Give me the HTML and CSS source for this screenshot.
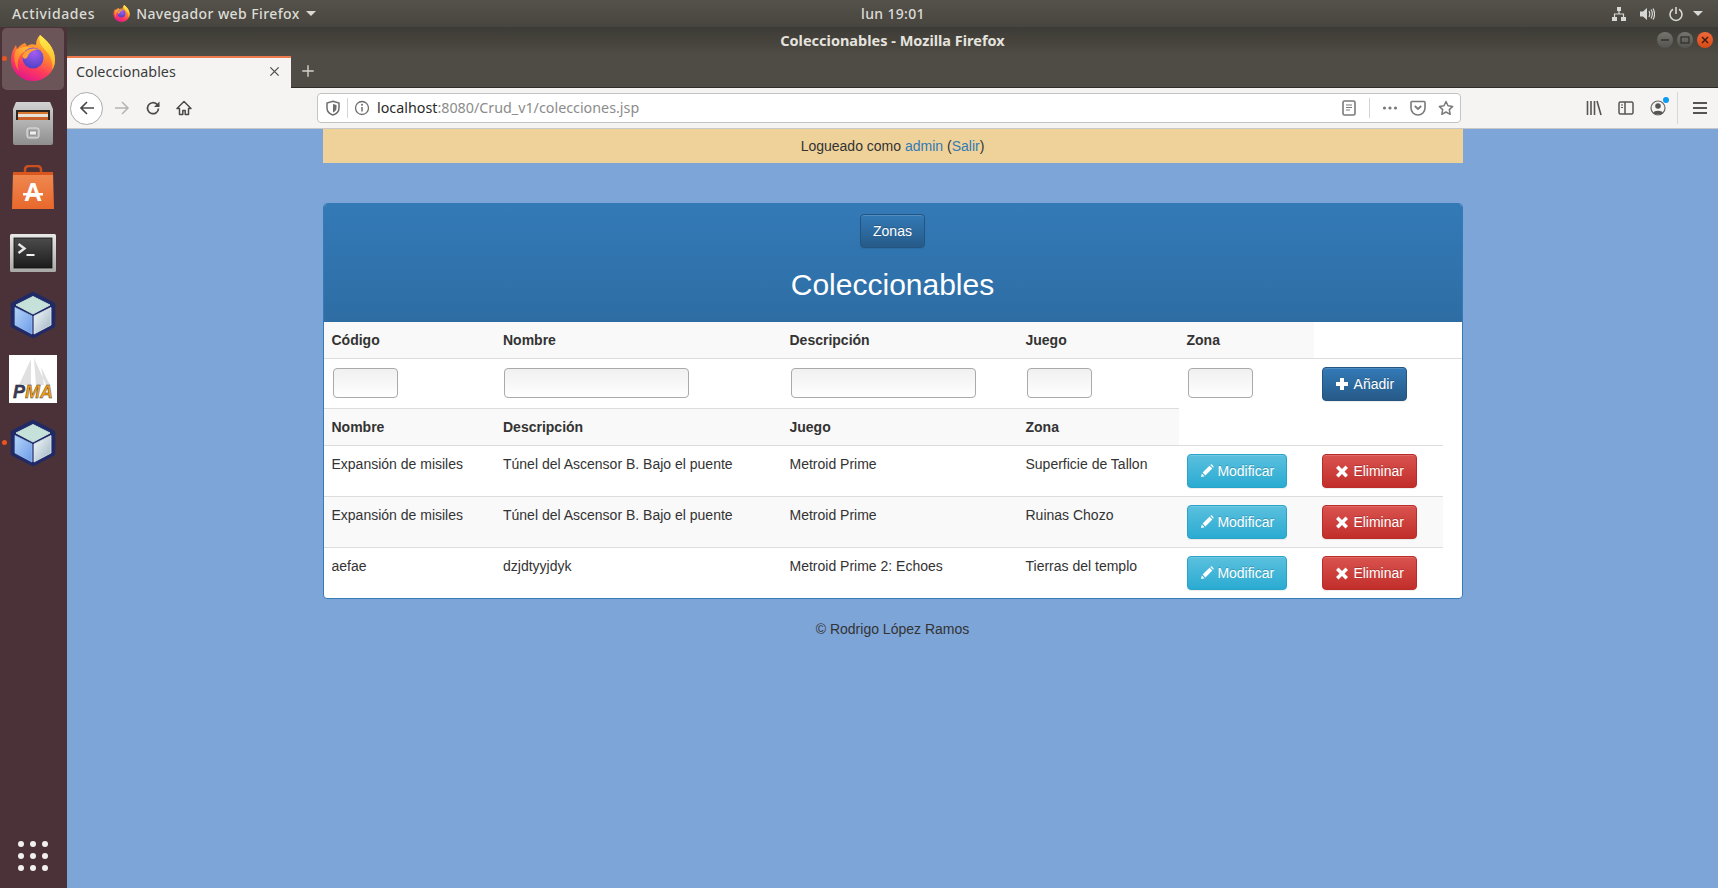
FILE: index.html
```html
<!DOCTYPE html>
<html lang="es">
<head>
<meta charset="utf-8">
<title>Coleccionables - Mozilla Firefox</title>
<link rel="stylesheet" href="styles.css">
</head>
<body>
<svg class="defs" aria-hidden="true">
  <defs>
    <linearGradient id="ffBody" x1="0.8" y1="0" x2="0.35" y2="1">
      <stop offset="0" stop-color="#ffc93a"/><stop offset="0.4" stop-color="#ff8a2c"/><stop offset="0.72" stop-color="#ff3a5e"/><stop offset="1" stop-color="#e0188c"/>
    </linearGradient>
    <linearGradient id="ffTail" x1="0.5" y1="0" x2="0.5" y2="1">
      <stop offset="0" stop-color="#fff04a"/><stop offset="0.7" stop-color="#ffc233"/><stop offset="1" stop-color="#ff9a2e"/>
    </linearGradient>
    <linearGradient id="ffFox" x1="0.8" y1="0" x2="0.1" y2="1">
      <stop offset="0" stop-color="#ffc53a"/><stop offset="1" stop-color="#ff6a28"/>
    </linearGradient>
    <radialGradient id="ffGlobe" cx="0.55" cy="0.25" r="0.8">
      <stop offset="0" stop-color="#a45cf0"/><stop offset="1" stop-color="#4a40c4"/>
    </radialGradient>
    <linearGradient id="cubeLeft" x1="0" y1="0" x2="1" y2="1">
      <stop offset="0" stop-color="#b5d4f8"/><stop offset="1" stop-color="#6d9be8"/>
    </linearGradient>
    <linearGradient id="cubeRight" x1="0" y1="0" x2="1" y2="1">
      <stop offset="0" stop-color="#f6fafb"/><stop offset="1" stop-color="#9db3c2"/>
    </linearGradient>
    <linearGradient id="bagFill" x1="0" y1="0" x2="0" y2="1">
      <stop offset="0" stop-color="#ef8a52"/><stop offset="1" stop-color="#e9682c"/>
    </linearGradient>
    <linearGradient id="cabFill" x1="0" y1="0" x2="0" y2="1">
      <stop offset="0" stop-color="#d2d2d2"/><stop offset="1" stop-color="#8e8e8e"/>
    </linearGradient>
    <linearGradient id="termFrame" x1="0" y1="0" x2="0" y2="1">
      <stop offset="0" stop-color="#e8e8e6"/><stop offset="1" stop-color="#a8a8a6"/>
    </linearGradient>
    <linearGradient id="termScreen" x1="0" y1="0" x2="0" y2="1">
      <stop offset="0" stop-color="#4c4c4c"/><stop offset="1" stop-color="#1c1c1c"/>
    </linearGradient>
    <symbol id="firefox" viewBox="0 0 46 46">
      <path d="M30 0C36 5 45 12 45 25A22 21 0 0 1 1 25C1 19 3 14 6 10L7 14C9 11 12 9 15 8L17 11C20 9 23 9 26 10C26 6 27 3 30 0z" fill="url(#ffBody)"/>
      <path d="M30 0C36 5 45 12 45 25C45 29 44 32 42 35C43 28 41 21 36 16C31 11 28 6 30 0z" fill="url(#ffTail)"/>
      <path d="M6 15C3 21 4 30 9 36C6 28 9 19 14 17C17 16 22 17 28 14C24 13 20 12 16 12C12 12 9 13 6 15z" fill="url(#ffFox)"/>
      <circle cx="23" cy="23" r="10.500" fill="url(#ffGlobe)"/>
      <path d="M12.500 21C14 15 22 11 30 15C25 14 20 16 18 21C17 24 13 25 12.500 21z" fill="#ffa030"/>
    </symbol>
    <symbol id="cube" viewBox="0 0 46 48">
      <polygon points="23,3 43,13.500 43,34.500 23,45 3,34.500 3,13.500" fill="#1f2a66" stroke="#1f2a66" stroke-width="4.500" stroke-linejoin="round"/>
      <polygon points="23,5.500 40,14 23,23 6,14" fill="#c6e0da" stroke="#c6e0da" stroke-linejoin="round"/>
      <polygon points="5,16.500 22,25 22,43 5,34" fill="url(#cubeLeft)" stroke="#9cc0f0" stroke-width="0.800" stroke-linejoin="round"/>
      <polygon points="41,16.500 24,25 24,43 41,34" fill="url(#cubeRight)" stroke="#dfe8ee" stroke-width="0.800" stroke-linejoin="round"/>
    </symbol>
  </defs>
</svg>

<header class="topbar">
  <span class="top-activities">Actividades</span>
  <span class="top-app">
    <svg class="ff-small"><use href="#firefox"/></svg>
    <span>Navegador web Firefox</span>
    <span class="caret"></span>
  </span>
  <span class="top-clock">lun 19:01</span>
  <span class="top-status">
    <svg class="st-net" viewBox="0 0 16 16"><path d="M6 1h4v4H6zM1 11h5v4H1zM10 11h5v4h-5z" fill="#d8d8d4"/><path d="M8 5v3M3.500 11V8h9v3" stroke="#d8d8d4" fill="none" stroke-width="1.200"/></svg>
    <svg class="st-vol" viewBox="0 0 16 16"><path d="M1 5.500h3L8 2v12L4 10.500H1z" fill="#d8d8d4"/><path d="M10 5c1 2 1 4 0 6M12 3.500c1.800 3 1.800 6 0 9M14 2.500c2 3.500 2 7.500 0 11" stroke="#d8d8d4" fill="none" stroke-width="1.200"/></svg>
    <svg class="st-pow" viewBox="0 0 16 16"><path d="M5 3.300a6 6 0 1 0 6 0" stroke="#d8d8d4" fill="none" stroke-width="1.600"/><path d="M8 1v7" stroke="#d8d8d4" stroke-width="1.600"/></svg>
    <span class="caret"></span>
  </span>
</header>

<div class="desktop">
  <nav class="dock">
    <div class="dock-item is-active">
      <span class="run-dot"></span>
      <svg class="ico-ff"><use href="#firefox"/></svg>
    </div>
    <div class="dock-item">
      <svg class="ico-cab" viewBox="0 0 40 43">
        <path d="M3 0h34l3 7v34a2 2 0 0 1-2 2H2a2 2 0 0 1-2-2V7z" fill="url(#cabFill)"/>
        <rect x="3" y="8" width="34" height="10" fill="#2c2622"/>
        <rect x="5" y="10" width="30" height="8" fill="#e8e2d8"/>
        <rect x="5" y="10" width="30" height="2" fill="#d9762e"/>
        <rect x="5" y="15" width="30" height="3" fill="#c8622a"/>
        <rect x="14" y="26" width="12" height="10" rx="2" fill="#b0b0b0" stroke="#e4e4e4"/>
        <rect x="16.500" y="29" width="7" height="4" fill="#eee" stroke="#555" stroke-width="0.500"/>
      </svg>
    </div>
    <div class="dock-item">
      <svg class="ico-bag" viewBox="0 0 42 44">
        <path d="M13 10V5c0-3 2-4 4-4h8c2 0 4 1 4 4v5" fill="none" stroke="#c9501f" stroke-width="2.500"/>
        <path d="M1 7h40l1 37H0z" fill="url(#bagFill)"/>
        <path d="M1 7h40l.1 3H.9z" fill="#d9561f"/>
        <text class="bag-a" x="21" y="36" text-anchor="middle">A</text>
        <rect x="11" y="28" width="20" height="2.500" fill="#fff"/>
      </svg>
    </div>
    <div class="dock-item">
      <svg class="ico-term" viewBox="0 0 46 38">
        <rect width="46" height="38" rx="1.500" fill="url(#termFrame)"/>
        <rect x="4" y="4" width="38" height="30" fill="url(#termScreen)" stroke="#111" stroke-width="0.800"/>
        <path d="M8.500 10l6 4.500-6 4.500" fill="none" stroke="#e8e8e8" stroke-width="2.400"/>
        <path d="M16.500 21h8" stroke="#f2f2f2" stroke-width="2"/>
      </svg>
    </div>
    <div class="dock-item">
      <svg class="ico-cube"><use href="#cube"/></svg>
    </div>
    <div class="dock-item">
      <svg class="ico-pma" viewBox="0 0 48 48">
        <rect width="48" height="48" fill="#fff"/>
        <path d="M22 4L10 30h12zM25 3l2 27h10zM32 12l9 18h-6z" fill="#e0e0e0"/>
        <text class="pma-p" x="4" y="43">P</text>
        <text class="pma-ma" x="16" y="43">MA</text>
      </svg>
    </div>
    <div class="dock-item">
      <span class="run-dot"></span>
      <svg class="ico-cube"><use href="#cube"/></svg>
    </div>
    <div class="dock-grid">
      <i></i><i></i><i></i><i></i><i></i><i></i><i></i><i></i><i></i>
    </div>
  </nav>

  <div class="window">
    <div class="titlebar">
      <span class="title-text">Coleccionables - Mozilla Firefox</span>
      <span class="win-btns">
        <span class="win-btn"><svg viewBox="0 0 16 16"><path d="M4 8h8" stroke="#2e2e2a" stroke-width="1.400"/></svg></span>
        <span class="win-btn"><svg viewBox="0 0 16 16"><rect x="4" y="5" width="8" height="6" fill="none" stroke="#2e2e2a" stroke-width="1.200"/></svg></span>
        <span class="win-btn win-close"><svg viewBox="0 0 16 16"><path d="M5 5l6 6M11 5l-6 6" stroke="#3a1a0c" stroke-width="1.400"/></svg></span>
      </span>
    </div>
    <div class="tabstrip">
      <div class="tab">
        <span class="tab-label">Coleccionables</span>
        <svg class="tab-x" viewBox="0 0 12 12"><path d="M1.500 1.500l9 9M10.500 1.500l-9 9" stroke="#55534e" stroke-width="1.500"/></svg>
      </div>
      <svg class="tab-plus" viewBox="0 0 16 16"><path d="M8 1.500v13M1.500 8h13" stroke="#d4d2cc" stroke-width="1.600"/></svg>
    </div>
    <div class="toolbar">
      <span class="back-btn"><svg class="tb-ico" viewBox="0 0 16 16"><path d="M15 8H2M8 2L2 8l6 6" fill="none" stroke="#4a4a4a" stroke-width="1.700"/></svg></span>
      <span class="nav-btn"><svg class="tb-ico" viewBox="0 0 16 16"><path d="M1 8h13M8 2l6 6-6 6" fill="none" stroke="#b4b4b2" stroke-width="1.500"/></svg></span>
      <span class="nav-btn"><svg class="tb-ico" viewBox="0 0 16 16"><path d="M13.500 8.500a5.500 5.500 0 1 1-1.700-4.300L14 6" fill="none" stroke="#4a4a4a" stroke-width="1.700"/><path d="M14.500 1.500v5.500H9z" fill="#4a4a4a"/></svg></span>
      <span class="nav-btn"><svg class="tb-ico" viewBox="0 0 16 16"><path d="M8 1.500L1 8.500h2.500V14.500h3.300v-4h2.400v4h3.300V8.500H15z" fill="none" stroke="#4a4a4a" stroke-width="1.500" stroke-linejoin="round"/></svg></span>
      <div class="urlbar">
        <svg class="tb-ico" viewBox="0 0 16 16"><path d="M8 1.300l6 1.700v5c0 3.500-3 6-6 7-3-1-6-3.500-6-7V3z" fill="none" stroke="#6e6e6e" stroke-width="1.500"/><path d="M8 4l3.500 1v3c0 2-1.500 3.500-3.500 4.500z" fill="#6e6e6e"/></svg>
        <span class="url-sep url-sep-a"></span>
        <svg class="tb-ico" viewBox="0 0 16 16"><circle cx="8" cy="8" r="6.500" fill="none" stroke="#6e6e6e" stroke-width="1.300"/><path d="M8 7v4.500" stroke="#6e6e6e" stroke-width="1.500"/><circle cx="8" cy="4.800" r="1" fill="#6e6e6e"/></svg>
        <span class="url-text"><span class="url-host">localhost</span>:8080/Crud_v1/colecciones.jsp</span>
        <svg class="tb-ico" viewBox="0 0 16 16"><rect x="2" y="1" width="12" height="14" rx="1.500" fill="none" stroke="#7a7a7a" stroke-width="1.600"/><path d="M5 5h6M5 7.500h6M5 10h4" stroke="#7a7a7a" stroke-width="1.100"/></svg>
        <span class="url-sep url-sep-b"></span>
        <svg class="tb-ico" viewBox="0 0 16 16"><circle cx="2.500" cy="8" r="1.600" fill="#7a7a7a"/><circle cx="8" cy="8" r="1.600" fill="#7a7a7a"/><circle cx="13.500" cy="8" r="1.600" fill="#7a7a7a"/></svg>
        <svg class="tb-ico url-pocket" viewBox="0 0 16 16"><path d="M2 1.500h12a1 1 0 0 1 1 1V8a7 7 0 0 1-14 0V2.500a1 1 0 0 1 1-1z" fill="none" stroke="#7a7a7a" stroke-width="1.600"/><path d="M4.800 6l3.200 3 3.200-3" fill="none" stroke="#7a7a7a" stroke-width="1.800"/></svg>
        <svg class="tb-ico url-star" viewBox="0 0 16 16"><path d="M8 1.500l2 4.300 4.700.6-3.400 3.200.9 4.700L8 12l-4.200 2.300.9-4.700L1.300 6.400 6 5.800z" fill="none" stroke="#7a7a7a" stroke-width="1.500" stroke-linejoin="round"/></svg>
      </div>
      <svg class="tb-ico rt-lib" viewBox="0 0 16 16"><path d="M1.500 1v14M5 1v14M8.500 1v14M11 1l4 14" fill="none" stroke="#555" stroke-width="1.600"/></svg>
      <svg class="tb-ico rt-side" viewBox="0 0 16 16"><rect x="1" y="2" width="14" height="12" rx="1.500" fill="none" stroke="#555" stroke-width="1.500"/><path d="M7 2v12" stroke="#555" stroke-width="1.500"/><path d="M3 5h2M3 7.500h2" stroke="#555"/></svg>
      <span class="rt-account">
        <svg class="tb-ico" viewBox="0 0 16 16"><circle cx="8" cy="8" r="7" fill="none" stroke="#666" stroke-width="1.200"/><circle cx="8" cy="6" r="2.800" fill="#555"/><path d="M3 13c1-3 9-3 10 0-2 2-8 2-10 0z" fill="#555"/></svg>
        <i class="badge-dot"></i>
      </span>
      <span class="rt-sep"></span>
      <svg class="tb-ico rt-menu" viewBox="0 0 16 16"><path d="M1 3h14M1 8h14M1 13h14" stroke="#555" stroke-width="1.800"/></svg>
    </div>

    <main class="page">
      <div class="container">
        <div class="login-bar">Logueado como <a href="#">admin</a> (<a href="#">Salir</a>)</div>

        <section class="panel">
          <div class="panel-heading">
            <a class="btn btn-primary" href="#">Zonas</a>
            <h1>Coleccionables</h1>
          </div>
          <table class="grid">
            <colgroup>
              <col class="c1"><col class="c2"><col class="c3"><col class="c4"><col class="c5"><col class="c6"><col class="c7">
            </colgroup>
            <tr class="head-first">
              <th>Código</th><th>Nombre</th><th>Descripción</th><th>Juego</th><th>Zona</th>
            </tr>
            <tr class="input-row">
              <td><input class="fld fld-s" type="text"></td>
              <td><input class="fld fld-l" type="text"></td>
              <td><input class="fld fld-l" type="text"></td>
              <td><input class="fld fld-s" type="text"></td>
              <td><input class="fld fld-s" type="text"></td>
              <td colspan="2"><a class="btn btn-primary" href="#"><svg class="gi gi-plus" viewBox="0 0 14 14"><path d="M5 1h4v4h4v4H9v4H5V9H1V5h4z" fill="#fff"/></svg> Añadir</a></td>
            </tr>
            <tr class="head-second">
              <th>Nombre</th><th>Descripción</th><th>Juego</th><th>Zona</th>
            </tr>
            <tr class="data-row">
              <td>Expansión de misiles</td><td>Túnel del Ascensor B. Bajo el puente</td><td>Metroid Prime</td><td>Superficie de Tallon</td>
              <td><a class="btn btn-info" href="#"><svg class="gi" viewBox="0 0 14 14"><path d="M1 13l.8-3.600 2.800 2.800zM2.600 8.600L9.500 1.700l2.800 2.800-6.900 6.900zM10.300.9c.8-.8 1.400-.8 2 0l.8.8c.6.700.6 1.200 0 2z" fill="#fff"/></svg> Modificar</a></td>
              <td><a class="btn btn-danger" href="#"><svg class="gi gi-x" viewBox="0 0 14 14"><path d="M3.500 1.500L7 5l3.500-3.500 2.500 2.500L9.500 7.500 13 11l-2.500 2.500L7 10l-3.500 3.500L1 11l3.500-3.500L1 4z" fill="#fff"/></svg> Eliminar</a></td>
            </tr>
            <tr class="data-row is-striped">
              <td>Expansión de misiles</td><td>Túnel del Ascensor B. Bajo el puente</td><td>Metroid Prime</td><td>Ruinas Chozo</td>
              <td><a class="btn btn-info" href="#"><svg class="gi" viewBox="0 0 14 14"><path d="M1 13l.8-3.600 2.800 2.800zM2.600 8.600L9.500 1.700l2.800 2.800-6.900 6.900zM10.300.9c.8-.8 1.400-.8 2 0l.8.8c.6.700.6 1.200 0 2z" fill="#fff"/></svg> Modificar</a></td>
              <td><a class="btn btn-danger" href="#"><svg class="gi gi-x" viewBox="0 0 14 14"><path d="M3.500 1.500L7 5l3.500-3.500 2.500 2.500L9.500 7.500 13 11l-2.500 2.500L7 10l-3.500 3.500L1 11l3.500-3.500L1 4z" fill="#fff"/></svg> Eliminar</a></td>
            </tr>
            <tr class="data-row">
              <td>aefae</td><td>dzjdtyyjdyk</td><td>Metroid Prime 2: Echoes</td><td>Tierras del templo</td>
              <td><a class="btn btn-info" href="#"><svg class="gi" viewBox="0 0 14 14"><path d="M1 13l.8-3.600 2.800 2.800zM2.600 8.600L9.500 1.700l2.800 2.800-6.900 6.900zM10.300.9c.8-.8 1.400-.8 2 0l.8.8c.6.700.6 1.200 0 2z" fill="#fff"/></svg> Modificar</a></td>
              <td><a class="btn btn-danger" href="#"><svg class="gi gi-x" viewBox="0 0 14 14"><path d="M3.500 1.500L7 5l3.500-3.500 2.500 2.500L9.500 7.500 13 11l-2.500 2.500L7 10l-3.500 3.500L1 11l3.500-3.500L1 4z" fill="#fff"/></svg> Eliminar</a></td>
            </tr>
          </table>
        </section>

        <footer class="page-footer">© Rodrigo López Ramos</footer>
      </div>
    </main>
  </div>
</div>
</body>
</html>
```

FILE: styles.css
```css
* { box-sizing: border-box; }
html, body { margin: 0; height: 100%; overflow: hidden; }
body {
  display: flex;
  flex-direction: column;
  width: 1718px;
  height: 888px;
  font-family: "Liberation Sans", Arial, sans-serif;
  font-size: 14px;
  line-height: 20px;
  color: #333;
  background: #7da5d8;
}
.defs { position: absolute; width: 0; height: 0; }

/* GNOME top bar */
.topbar {
  flex: 0 0 27px;
  display: flex;
  align-items: center;
  padding-left: 12px;
  background: linear-gradient(#55524b, #47453f);
  color: #dcdcd6;
  font-family: "Noto Sans", sans-serif;
  font-size: 14px;
  font-weight: 500;
  letter-spacing: 0.6px;
  position: relative;
}
.top-activities { margin-right: 18px; }
.top-app { display: flex; align-items: center; gap: 6px; letter-spacing: 0.4px; }
.ff-small { width: 17px; height: 17px; }
.caret {
  width: 0; height: 0; margin-left: 0;
  border-left: 5px solid transparent;
  border-right: 5px solid transparent;
  border-top: 5px solid #d8d8d4;
}
.top-clock { position: absolute; left: 0; right: 0; text-align: center; pointer-events: none; padding-left: 68px; letter-spacing: 0.35px; }
.top-status { margin-left: auto; display: flex; align-items: center; padding-right: 15px; }
.st-net { width: 16px; height: 16px; margin-right: 12px; }
.st-vol { width: 16px; height: 16px; margin-right: 13px; }
.st-pow { width: 16px; height: 16px; margin-right: 9px; }

.desktop { flex: 1; display: flex; min-height: 0; }

/* Dock */
.dock {
  flex: 0 0 67px;
  display: flex;
  flex-direction: column;
  background: #4a3238;
}
.dock-item {
  flex: 0 0 64px;
  display: flex;
  align-items: center;
  justify-content: center;
  position: relative;
  margin: 0 2px 0 0;
}
.is-active { margin: 1px 3px 1px 2px; flex-basis: 62px; background: #6b5558; border-radius: 5px; }
.run-dot {
  position: absolute; left: 2px; top: 50%;
  width: 5px; height: 5px; margin-top: -3px;
  border-radius: 50%;
  background: #e95420;
}
.is-active .run-dot { left: 0; }
.ico-ff { width: 46px; height: 46px; margin-bottom: 2px; }
.ico-cab { width: 40px; height: 43px; }
.ico-bag { width: 42px; height: 44px; }
.ico-term { width: 46px; height: 38px; margin-top: 4px; }
.ico-cube { width: 46px; height: 48px; }
.ico-pma { width: 48px; height: 48px; }
.bag-a { font: 700 25px "Liberation Sans", sans-serif; fill: #fff; }
.pma-p { font: italic 700 18px "Liberation Sans", sans-serif; fill: #3c3c5c; stroke: #222; stroke-width: .4px; }
.pma-ma { font: italic 700 18px "Liberation Sans", sans-serif; fill: #f7a014; stroke: #333; stroke-width: .4px; }
.dock-grid {
  margin: auto 0 0;
  padding: 0 0 17px 18px;
  display: grid;
  grid-template-columns: repeat(3, 6px);
  gap: 6px;
}
.dock-grid i { width: 6px; height: 6px; border-radius: 50%; background: #f2f0f0; }

/* Firefox window */
.window { flex: 1; display: flex; flex-direction: column; min-width: 0; }
.titlebar {
  flex: 0 0 28px;
  display: flex;
  align-items: center;
  justify-content: center;
  position: relative;
  padding-bottom: 2px;
  background: linear-gradient(#3d3b35, #4f4b45);
  color: #e4e3de;
  font-family: "Noto Sans", sans-serif;
  font-weight: 700;
  font-size: 14.500px;
}
.win-btns { position: absolute; right: 5px; top: 5px; display: flex; gap: 4px; }
.win-btn {
  width: 16px; height: 16px; border-radius: 50%;
  background: linear-gradient(#76746e, #55534e);
  display: flex;
}
.win-close { background: linear-gradient(#f0693a, #d84a15); }
.tabstrip {
  flex: 0 0 33px;
  display: flex;
  align-items: flex-end;
  background: #4f4b45;
  box-shadow: inset 0 -1px 0 #2e2c28;
}
.tab {
  width: 224px;
  height: 32px;
  display: flex;
  align-items: center;
  justify-content: space-between;
  padding: 0 11px 3px 9px;
  background: #f5f4f2;
  border-top: 2px solid #f07a50;
  color: #3c3c3c;
  font-family: "Noto Sans", sans-serif;
  font-size: 14.300px;
}
.tab-x { width: 11px; height: 11px; }
.tab-plus { width: 14px; height: 14px; margin: 0 0 10px 10px; }

.toolbar {
  flex: 0 0 41px;
  display: flex;
  align-items: center;
  padding: 0 0 0 3px;
  background: #f5f4f2;
  border-bottom: 1px solid #c8c8c6;
}
.tb-ico { width: 16px; height: 16px; flex: none; }
.back-btn {
  width: 33px; height: 33px; margin-right: 3px;
  display: flex; align-items: center; justify-content: center;
  background: #fff; border: 1px solid #ababab; border-radius: 50%;
}
.nav-btn { width: 31px; display: flex; justify-content: center; }
.urlbar {
  width: 1144px;
  height: 30px;
  margin-left: 118px;
  display: flex;
  align-items: center;
  padding: 0 6px 0 7px;
  background: #fff;
  border: 1px solid #c4c4c2;
  border-radius: 4px;
}
.url-sep { width: 1px; height: 20px; background: #d4d4d2; flex: none; }
.url-sep-a { margin: 0 6px; }
.url-sep-b { margin: 0 12px 0 12px; }
.url-text {
  flex: 1;
  padding-left: 7px;
  font-family: "Noto Sans", sans-serif;
  font-size: 14.300px;
  color: #8c8c8c;
}
.url-host { color: #2a2a2a; }
.url-pocket { margin-left: 12px; }
.url-star { margin-left: 12px; }
.rt-lib { margin-left: 125px; }
.rt-side { margin-left: 16px; }
.rt-account { margin-left: 16px; width: 16px; height: 16px; position: relative; }
.rt-account .tb-ico { display: block; }
.badge-dot {
  position: absolute; right: -3px; top: -3px;
  width: 6px; height: 6px; border-radius: 50%;
  background: #0a9cf5;
}
.rt-sep { width: 1px; height: 32px; background: #d8d8d6; margin: 0 14px 0 11px; }
.rt-menu { margin-left: 0; }

/* Page */
.page { flex: 1; min-height: 0; }
.container { width: 1140px; margin: 0 auto; }
.login-bar {
  height: 34px;
  margin-bottom: 40px;
  padding-top: 7px;
  text-align: center;
  background: #efd29a;
}
a { color: #337ab7; text-decoration: none; }

.panel {
  background: #fff;
  border: 1px solid #337ab7;
  border-radius: 4px;
  overflow: hidden;
}
.panel-heading {
  height: 118px;
  padding: 10px 15px;
  text-align: center;
  background: linear-gradient(#337ab7, #2e6da4);
  color: #fff;
}
.panel-heading h1 {
  margin: 20px 0 10px;
  font-size: 30px;
  font-weight: 500;
  line-height: 33px;
}
.btn {
  display: inline-block;
  height: 34px;
  padding: 6px 12px;
  border: 1px solid transparent;
  border-radius: 4px;
  color: #fff;
  white-space: nowrap;
  vertical-align: top;
  text-shadow: 0 -1px 0 rgba(0,0,0,.2);
  box-shadow: inset 0 1px 0 rgba(255,255,255,.15), 0 1px 1px rgba(0,0,0,.075);
}
.btn-primary { background: linear-gradient(#337ab7, #265a88); border-color: #245580; }
.btn-info { background: linear-gradient(#5bc0de, #2aabd2); border-color: #28a4c9; }
.btn-danger { background: linear-gradient(#d9534f, #c12e2a); border-color: #b92c28; }
.gi { width: 14px; height: 14px; vertical-align: -2px; }
.gi-plus { margin-right: 2px; }
.gi-x { margin-right: 1px; }

.grid { width: 1138px; table-layout: fixed; border-collapse: collapse; }
.c1 { width: 171.500px; }
.c2 { width: 286.500px; }
.c3 { width: 236px; }
.c4 { width: 161px; }
.c5 { width: 135px; }
.c6 { width: 129px; }
.c7 { width: 19px; }
.grid th, .grid td { padding: 8px; text-align: left; vertical-align: top; }
.grid th { font-weight: 700; background: #f9f9f9; }
.input-row td, .head-second th, .data-row td { border-top: 1px solid #ddd; }
.input-row td { padding-bottom: 7px; }
.is-striped td { background: #f9f9f9; }
.data-row td { height: 50px; }
.fld {
  display: block;
  height: 30px;
  margin: 1px 0 0 1px;
  border: 1px solid #aaa;
  border-radius: 4px;
  background: linear-gradient(#f0f0f0, #fff);
  padding: 0;
}
.fld-s { width: 65px; }
.fld-l { width: 185px; }
.page-footer { margin-top: 20px; text-align: center; }
```
